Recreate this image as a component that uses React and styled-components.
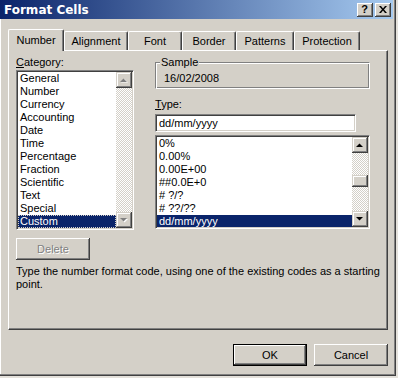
import React from 'react';
import styled, { createGlobalStyle } from 'styled-components';

const GlobalStyle = createGlobalStyle`
  html, body {
    margin: 0;
    padding: 0;
    background: #e4e1db;
  }
  body {
    font-family: "Liberation Sans", Arial, sans-serif;
    font-size: 11px;
    color: #000;
  }
`;

const categories = [
  'General', 'Number', 'Currency', 'Accounting', 'Date', 'Time',
  'Percentage', 'Fraction', 'Scientific', 'Text', 'Special', 'Custom',
];

const formats = ['0%', '0.00%', '0.00E+00', '##0.0E+0', '# ?/?', '# ??/??', 'dd/mm/yyyy'];

const tabs = [
  { label: 'Number', w: 56 },
  { label: 'Alignment', w: 64 },
  { label: 'Font', w: 54 },
  { label: 'Border', w: 54 },
  { label: 'Patterns', w: 58 },
  { label: 'Protection', w: 66 },
];

const Arrow = ({ down, disabled }) => (
  <svg width="8" height="5" viewBox="0 0 8 5">
    {disabled && (
      <polygon
        points={down ? '1,1 8,1 4.5,4.5' : '1,4.5 8,4.5 4.5,1'}
        fill="#fff"
      />
    )}
    <polygon
      points={down ? '0,0 7,0 3.5,3.5' : '0,4 7,4 3.5,0.5'}
      fill={disabled ? '#808080' : '#000'}
    />
  </svg>
);

const ScrollBar = ({ disabled, thumbTop }) => (
  <Scroll>
    <ScrollButton>
      <Arrow disabled={disabled} />
    </ScrollButton>
    <Track>
      {thumbTop !== undefined && <Thumb style={{ marginTop: thumbTop }} />}
    </Track>
    <ScrollButton>
      <Arrow down disabled={disabled} />
    </ScrollButton>
  </Scroll>
);

export default function App() {
  return (
    <>
      <GlobalStyle />
      <Window>
        <TitleBar>
          <Title>Format Cells</Title>
          <TitleButtons>
            <TitleButton>?</TitleButton>
            <TitleButton>
              <svg width="8" height="7" viewBox="0 0 8 7">
                <path d="M0 0h2l2 2.5L6 0h2L5 3.5 8 7H6L4 4.5 2 7H0l3-3.5z" fill="#000" />
              </svg>
            </TitleButton>
          </TitleButtons>
        </TitleBar>

        <Body>
          <TabRow>
            {tabs.map((t, i) => (
              <Tab key={t.label} $w={t.w} $active={i === 0}>
                {t.label}
              </Tab>
            ))}
          </TabRow>

          <Panel>
            <Columns>
              <LeftCol>
                <Label>
                  <u>C</u>ategory:
                </Label>
                <ListBox $h={160}>
                  <Items>
                    {categories.map((c) => (
                      <Item key={c} $selected={c === 'Custom'} $focus={c === 'Custom'}>
                        {c}
                      </Item>
                    ))}
                  </Items>
                  <ScrollBar disabled />
                </ListBox>
                <Button disabled>Delete</Button>
              </LeftCol>

              <RightCol>
                <GroupBox>
                  <Legend>Sample</Legend>
                  <SampleValue>16/02/2008</SampleValue>
                </GroupBox>
                <TypeLabel>
                  <u>T</u>ype:
                </TypeLabel>
                <TextInput>dd/mm/yyyy</TextInput>
                <ListBox $h={94}>
                  <Items>
                    {formats.map((f) => (
                      <Item key={f} $selected={f === 'dd/mm/yyyy'}>
                        {f}
                      </Item>
                    ))}
                  </Items>
                  <ScrollBar thumbTop={22} />
                </ListBox>
              </RightCol>
            </Columns>

            <Description>
              Type the number format code, using one of the existing codes as a starting
              point.
            </Description>
          </Panel>

          <ButtonRow>
            <Button $default>OK</Button>
            <Button>Cancel</Button>
          </ButtonRow>
        </Body>
      </Window>
    </>
  );
}

const Window = styled.div`
  width: 396px;
  height: 376px;
  box-sizing: border-box;
  background: #d4d0c8;
  border-right: 1px solid #404040;
  border-bottom: 1px solid #404040;
  box-shadow: inset -1px -1px #808080, inset 1px 0 #fff;
  display: flex;
  flex-direction: column;
`;

const TitleBar = styled.div`
  height: 19px;
  margin-right: 2px;
  background: linear-gradient(to right, #0a246a, #a6caf0);
  display: flex;
  align-items: center;
  justify-content: space-between;
  padding: 0 2px 0 4px;
  flex-shrink: 0;
`;

const Title = styled.span`
  color: #fff;
  font-weight: bold;
  font-size: 12px;
  font-family: "DejaVu Sans", "Liberation Sans", sans-serif;
`;

const TitleButtons = styled.div`
  display: flex;
  gap: 2px;
`;

const TitleButton = styled.div`
  width: 16px;
  height: 14px;
  box-sizing: border-box;
  background: #d4d0c8;
  box-shadow: inset -1px -1px #404040, inset 1px 1px #fff, inset -2px -2px #808080;
  display: flex;
  align-items: center;
  justify-content: center;
  font-weight: bold;
  font-size: 11px;
  line-height: 1;
  padding-right: 1px;
`;

const Body = styled.div`
  flex: 1;
  display: flex;
  flex-direction: column;
  padding: 10px 6px 0 8px;
`;

const TabRow = styled.div`
  display: flex;
  align-items: flex-end;
  height: 22px;
  position: relative;
  z-index: 1;
  margin-bottom: -1px;
`;

const Tab = styled.div`
  width: ${(p) => p.$w}px;
  height: ${(p) => (p.$active ? 22 : 19)}px;
  box-sizing: border-box;
  background: #d4d0c8;
  border-top: 1px solid #fff;
  border-left: 1px solid #fff;
  border-right: 1px solid #404040;
  border-radius: 2px 2px 0 0;
  box-shadow: inset -1px 0 #808080;
  display: flex;
  align-items: center;
  justify-content: center;
  padding-bottom: ${(p) => (p.$active ? 2 : 0)}px;
  margin-bottom: ${(p) => (p.$active ? 0 : 1)}px;
`;

const Panel = styled.div`
  width: 380px;
  height: 280px;
  box-sizing: border-box;
  border-top: 1px solid #fff;
  border-left: 1px solid #fff;
  border-right: 1px solid #404040;
  border-bottom: 1px solid #404040;
  box-shadow: inset -1px -1px #808080;
  padding: 5px 6px 0 7px;
  display: flex;
  flex-direction: column;
`;

const Columns = styled.div`
  display: grid;
  grid-template-columns: 118px 215px;
  column-gap: 21px;
`;

const LeftCol = styled.div`
  display: flex;
  flex-direction: column;
  align-items: flex-start;
`;

const RightCol = styled.div`
  display: flex;
  flex-direction: column;
`;

const Label = styled.div`
  height: 13px;
  line-height: 13px;
  margin-bottom: 1px;
`;

const TypeLabel = styled(Label)`
  margin-top: 9px;
  margin-bottom: 3px;
`;

const ListBox = styled.div`
  width: 100%;
  height: ${(p) => p.$h}px;
  box-sizing: border-box;
  background: #fff;
  border-top: 1px solid #808080;
  border-left: 1px solid #808080;
  border-right: 1px solid #fff;
  border-bottom: 1px solid #fff;
  box-shadow: inset 1px 1px #404040, inset -1px -1px #d4d0c8;
  padding: 1px;
  display: flex;
  overflow: hidden;
`;

const Items = styled.div`
  flex: 1;
  display: flex;
  flex-direction: column;
  overflow: hidden;
`;

const Item = styled.div`
  height: 13px;
  line-height: 13px;
  flex-shrink: 0;
  padding-left: 2px;
  white-space: nowrap;
  background: ${(p) => (p.$selected ? '#0a246a' : 'transparent')};
  color: ${(p) => (p.$selected ? '#fff' : '#000')};
  outline: ${(p) => (p.$focus ? '1px dotted #d4d0c8' : 'none')};
  outline-offset: -1px;
`;

const Scroll = styled.div`
  width: 16px;
  display: flex;
  flex-direction: column;
  flex-shrink: 0;
`;

const ScrollButton = styled.div`
  width: 16px;
  height: 16px;
  box-sizing: border-box;
  background: #d4d0c8;
  box-shadow: inset -1px -1px #404040, inset 1px 1px #d4d0c8, inset -2px -2px #808080, inset 2px 2px #fff;
  display: flex;
  align-items: center;
  justify-content: center;
  flex-shrink: 0;
`;

const Track = styled.div`
  flex: 1;
  background-color: #fff;
  background-image: conic-gradient(#d4d0c8 25%, #fff 0 50%, #d4d0c8 0 75%, #fff 0);
  background-size: 2px 2px;
`;

const Thumb = styled.div`
  height: 12px;
  background: #d4d0c8;
  box-shadow: inset -1px -1px #404040, inset 1px 1px #d4d0c8, inset -2px -2px #808080, inset 2px 2px #fff;
`;

const Button = styled.button`
  width: 74px;
  height: 22px;
  box-sizing: border-box;
  font: inherit;
  background: #d4d0c8;
  color: ${(p) => (p.disabled ? '#808080' : '#000')};
  text-shadow: ${(p) => (p.disabled ? '1px 1px #fff' : 'none')};
  border: ${(p) => (p.$default ? '1px solid #000' : 'none')};
  box-shadow: inset -1px -1px #404040, inset 1px 1px #fff, inset -2px -2px #808080;
  padding: 0;
  margin-top: 8px;
`;

const GroupBox = styled.fieldset`
  margin: 0;
  padding: 3px 7px 2px 7px;
  height: 33px;
  box-sizing: border-box;
  border: 1px solid #808080;
  border-right-color: #fff;
  border-bottom-color: #fff;
  box-shadow: inset 1px 1px #fff, inset -1px -1px #808080;
  min-width: 0;
`;

const Legend = styled.legend`
  padding: 0 1px;
  margin-left: -3px;
  line-height: 13px;
  background: #d4d0c8;
`;

const SampleValue = styled.div`
  line-height: 13px;
  padding-left: 1px;
`;

const TextInput = styled.div`
  width: 201px;
  height: 18px;
  box-sizing: border-box;
  background: #fff;
  border-top: 1px solid #808080;
  border-left: 1px solid #808080;
  border-right: 1px solid #fff;
  border-bottom: 1px solid #fff;
  box-shadow: inset 1px 1px #404040, inset -1px -1px #d4d0c8;
  padding: 0 3px;
  line-height: 16px;
  margin-bottom: 3px;
`;

const Description = styled.p`
  margin: 5px 0 0 0;
  line-height: 13px;
  width: 372px;
`;

const ButtonRow = styled.div`
  display: flex;
  justify-content: flex-end;
  gap: 7px;
  width: 380px;
  margin-top: 6px;
`;
